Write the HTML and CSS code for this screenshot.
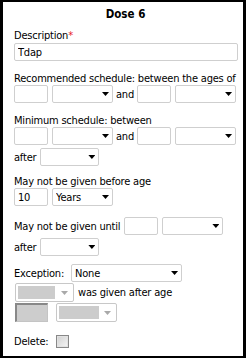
FILE: index.html
```html
<html>
	<head>
		<meta charset="utf-8" />
		<title>Dose 6</title>
		<link rel="stylesheet" href="styles.css">
	</head>
	<body>
		<div class="panel">
			<div class="title">Dose 6</div>

			<div class="group group-desc">
				<div class="label">Description<span class="req">*</span></div>
				<input class="box box-wide" type="text" value="Tdap" />
			</div>

			<div class="group group-rec">
				<div class="label">Recommended schedule: between the ages of</div>
				<div class="row">
					<input class="box" type="text" />
					<span class="pick"><select></select></span>
					<span class="word and">and</span>
					<input class="box" type="text" />
					<span class="pick"><select></select></span>
				</div>
			</div>

			<div class="group group-min">
				<div class="label">Minimum schedule: between</div>
				<div class="row">
					<input class="box" type="text" />
					<span class="pick"><select></select></span>
					<span class="word and">and</span>
					<input class="box" type="text" />
					<span class="pick"><select></select></span>
				</div>
				<div class="row row-after">
					<span class="word">after</span>
					<span class="pick pick-after"><select></select></span>
				</div>
			</div>

			<div class="group group-before">
				<div class="label">May not be given before age</div>
				<div class="row">
					<input class="box" type="text" value="10" />
					<span class="pick"><select><option>Years</option></select></span>
				</div>
			</div>

			<div class="group group-until">
				<div class="row">
					<span class="word">May not be given until</span>
					<input class="box" type="text" />
					<span class="pick"><select></select></span>
				</div>
				<div class="row row-after">
					<span class="word">after</span>
					<span class="pick pick-after"><select></select></span>
				</div>
			</div>

			<div class="group group-exc">
				<div class="row">
					<span class="word">Exception:</span>
					<span class="pick pick-exc"><select><option>None</option></select></span>
				</div>
				<div class="row row-off1">
					<span class="pick pick-off"><span class="fill"></span></span>
					<span class="word">was given after age</span>
				</div>
				<div class="row row-off2">
					<span class="box-off"></span>
					<span class="pick pick-off pick-off2"><span class="fill"></span></span>
				</div>
			</div>

			<div class="group group-del">
				<span class="word">Delete:</span>
				<span class="check"></span>
			</div>
		</div>
	</body>
</html>
```

FILE: styles.css
```css
body{
	margin: 0;
	font-family: "DejaVu Sans Condensed", "DejaVu Sans", sans-serif;
	font-size: 11px;
	letter-spacing: -0.2px;
	color: #000;
}
.panel{
	width: 246px;
	height: 358px;
	box-sizing: border-box;
	border: 3px solid #000;
	border-top-width: 2px;
	border-bottom-width: 2px;
	padding: 0 6px 0 11px;
	background: #fff;
}
.title{
	margin-top: 6px;
	line-height: 13px;
	text-align: center;
	font-weight: bold;
	font-size: 11.5px;
	letter-spacing: 0;
}
.label{
	height: 13px;
	line-height: 13px;
	white-space: nowrap;
}
.req{
	color: #e8182a;
}

/* text boxes */
.box{
	box-sizing: border-box;
	width: 34px;
	height: 18px;
	margin: 0;
	padding: 0 3px;
	border: 1px solid #cfcfcf;
	border-radius: 2px;
	font: inherit;
	letter-spacing: inherit;
	color: #000;
	background: #fff;
	outline: none;
}
.box-wide{
	display: block;
	width: 224px;
	margin-top: 1px;
}

/* drop downs, arrow drawn on top */
.pick{
	position: relative;
	display: inline-block;
	box-sizing: border-box;
	width: 61px;
	height: 18px;
	border: 1px solid #cfcfcf;
	border-radius: 2px;
	background: #fff;
}
.pick select{
	appearance: none;
	-webkit-appearance: none;
	display: block;
	width: 100%;
	height: 100%;
	margin: 0;
	padding: 0 0 0 3px;
	border: none;
	background: transparent;
	font: inherit;
	letter-spacing: inherit;
	color: #000;
	outline: none;
}
.pick::after{
	content: "";
	position: absolute;
	right: 3px;
	top: 6px;
	width: 7px;
	height: 4px;
	background: #000;
	clip-path: polygon(0 0, 100% 0, 50% 100%);
}
.pick-after{
	width: 59px;
}
.pick-exc{
	width: 111px;
	margin-left: 3px;
}

.row{
	display: flex;
	align-items: center;
	gap: 4px;
	height: 18px;
	white-space: nowrap;
}
.row .and{
	margin: 0 -1px;
}
.row-after{
	margin-top: 3px;
}

.group-desc{ margin-top: 8px; }
.group-rec{ margin-top: 11px; }
.group-min{ margin-top: 11px; }
.group-before{ margin-top: 9px; }
.group-until{ margin-top: 11px; }
.group-exc{ margin-top: 8px; }

/* disabled controls */
.row-off1{
	margin-top: 1px;
	height: 19px;
}
.row-off2{
	margin-top: 1px;
	height: 19px;
}
.pick-off{
	width: 59px;
	height: 19px;
	border-color: #c8c8c8;
	margin-left: 1px;
}
.pick-off::after{
	background: #a9a9a9;
	right: 5px;
	top: 7px;
}
.pick-off .fill{
	display: block;
	width: 37px;
	height: 13px;
	margin: 2px 0 0 2px;
	background: #cccccc;
}
.pick-off2{
	width: 61px;
	margin-left: 4px;
}
.pick-off2 .fill{
	width: 40px;
}
.box-off{
	box-sizing: border-box;
	width: 33px;
	height: 19px;
	margin-left: 1px;
	border: 1px solid #c4c4c4;
	border-top: 2px solid #888;
	border-left: 2px solid #888;
	background: #cdcdcd;
}

.group-del{
	display: flex;
	align-items: center;
	gap: 8px;
	margin-top: 13px;
	height: 13px;
}
.check{
	box-sizing: border-box;
	width: 13px;
	height: 13px;
	border: 1px solid #888;
	box-shadow: inset 0 0 0 1px #e2e2e2;
	background: linear-gradient(135deg, #d0d0d0, #f6f6f6);
}
```
